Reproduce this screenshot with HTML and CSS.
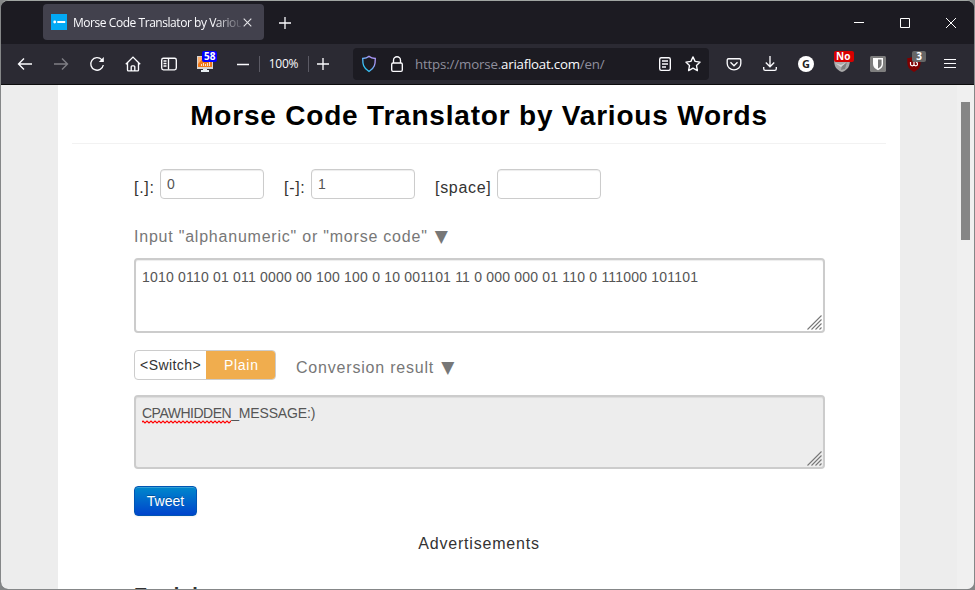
FILE: index.html
```
<!DOCTYPE html>
<html lang="en">
<head>
<meta charset="utf-8">
<title>Morse Code Translator by Various Words</title>
<link rel="stylesheet" href="styles.css">
</head>
<body>
<div class="window">
  <header class="tabbar">
    <div class="tab">
      <svg class="favicon" width="16" height="16" viewBox="0 0 16 16"><path fill="#03a9f4" d="M0 0h16v16H0z"/><circle cx="3.7" cy="8" r="1.4" fill="#fff"/><path fill="#fff" d="M6.3 7h7.9v2H6.3z"/></svg>
      <span class="tab-title">Morse Code Translator by Various</span>
      <svg class="tab-close" width="9" height="9" viewBox="0 0 9 9"><path d="M.7.7l7.6 7.6M8.3.7L.7 8.3" stroke="#e4e4e8" stroke-width="1.1"/></svg>
    </div>
    <svg class="newtab" width="12" height="12" viewBox="0 0 12 12"><path d="M6 0v12M0 6h12" stroke="#fbfbfe" stroke-width="1.3"/></svg>
    <div class="controls">
      <svg width="46" height="42" viewBox="0 0 46 42"><path d="M18 20.5h10" stroke="#fff"/></svg>
      <svg width="46" height="42" viewBox="0 0 46 42"><path d="M18.5 16.5h9v9h-9z" fill="none" stroke="#fff"/></svg>
      <svg width="46" height="42" viewBox="0 0 46 42"><path d="M18 16l10 10M28 16L18 26" stroke="#fff"/></svg>
    </div>
  </header>
  <nav class="toolbar">
    <span class="tool"><svg width="16" height="16" viewBox="0 0 16 16"><path d="M15 8H1.5M7 2.5L1.5 8 7 13.5"/></svg></span>
    <span class="tool dim"><svg width="16" height="16" viewBox="0 0 16 16"><path d="M1 8h13.5M9 2.5L14.5 8 9 13.5"/></svg></span>
    <span class="tool"><svg width="16" height="16" viewBox="0 0 16 16"><path d="M14.3 9A6.3 6.3 0 1 1 12.7 3.6L14 5"/><path d="M14.8 1v5h-5z" fill="#fbfbfe" stroke="none"/></svg></span>
    <span class="tool"><svg width="16" height="16" viewBox="0 0 16 16"><path d="M.8 8.200L8 1.100l7.200 7.100M2.500 7v7c0 .6.300.9.900.9h9.200c.6 0 .9-.3.900-.9V7M6.200 14.700v-3.900c0-.6.300-.9.900-.9h1.800c.6 0 .9.300.9.900v3.900"/></svg></span>
    <span class="tool"><svg width="16" height="16" viewBox="0 0 16 16"><rect x=".7" y="2.2" width="14.6" height="11.6" rx="1.7"/><path d="M7.5 2.5v11M2.5 5h3M2.5 7.5h3M2.5 10h3"/></svg></span>
    <span class="tool"><svg width="16" height="16" viewBox="0 0 16 16" stroke="none"><path fill="#d8d4d0" d="M0 0h16v13H0z"/><path fill="#f07818" d="M1 1h14v10H1z"/><path fill="#ffb070" d="M1 1h6L1 8z"/><path fill="#ffe0c4" d="M4 8h1v2H4zM6 7h1v3H6zM8 8h1v2H8zM10 7h1v3h-1zM12 6h1v4h-1z"/><path fill="#e7eef1" d="M6 13h4v1h2v2H4v-2h2z"/></svg><b class="badge blue">58</b></span>
    <span class="zoom-minus"><svg width="12" height="12" viewBox="0 0 12 12"><path d="M0 6.5h12"/></svg></span>
    <i class="sep"></i>
    <span class="zoom-label">100%</span>
    <i class="sep"></i>
    <span class="zoom-plus"><svg width="12" height="12" viewBox="0 0 12 12"><path d="M0 6h12M6 0v12"/></svg></span>
    <div class="urlbar">
      <svg width="16" height="18" viewBox="0 0 16 18"><defs><linearGradient id="shield" x1="1" y1="0" x2="0" y2="1"><stop offset=".25" stop-color="#a896f5"/><stop offset=".8" stop-color="#2cc4f4"/></linearGradient></defs><path stroke="url(#shield)" d="M8 1.400Q10.500 3.300 14.300 3.500c0 5.500-.5 9.500-6.300 13C2.200 13 1.700 9 1.700 3.500Q5.500 3.300 8 1.400z"/></svg>
      <svg class="lock" width="12" height="16" viewBox="0 0 12 16"><rect x=".7" y="7" width="10.600" height="8.300" rx="1.300"/><path d="M2.500 7V4.200a3.500 3.500 0 0 1 7 0V7"/></svg>
      <span class="url">https://morse.<em>ariafloat.com</em>/en/</span>
      <svg class="reader" width="12" height="14" viewBox="0 0 12 14"><rect x=".7" y=".7" width="10.600" height="12.600" rx="1.500"/><path d="M3 4h6M3 7h6M3 10h4"/></svg>
      <svg class="star" width="16" height="16" viewBox="0 0 16 16"><path stroke-linejoin="round" d="M8 .9l2.100 4.500 5 .7-3.600 3.500.9 5L8 12.200l-4.400 2.400.9-5L.9 6.100l5-.7z"/></svg>
    </div>
    <span class="tool"><svg width="16" height="16" viewBox="0 0 16 16"><path d="M2.500 2.700h11c.8 0 1.300.5 1.300 1.300v3.500a6.800 6.300 0 0 1-13.600 0V4c0-.8.5-1.300 1.300-1.300zM4.500 6.300L8 9.700l3.500-3.400"/></svg></span>
    <span class="tool"><svg width="16" height="16" viewBox="0 0 16 16"><path d="M8 0v10.500M3.800 6.500L8 10.700l4.200-4.200M1.700 11v1.800c0 1 .6 1.600 1.600 1.600h9.400c1 0 1.600-.6 1.600-1.600V11"/></svg></span>
    <span class="tool"><b class="g">G</b></span>
    <span class="tool"><svg width="16" height="16" viewBox="0 0 16 16" stroke="none"><path fill="#a9a9a9" d="M0 3h16c0 7-2 11-8 13C2 14 0 10 0 3z"/><path fill="#808080" d="M8 9l5-3-2 7-4 1z"/><path fill="#d4d4d4" d="M1 7l6 2 6-3-6 5z"/></svg><b class="badge red">No</b></span>
    <span class="tool"><svg width="16" height="16" viewBox="0 0 16 16" stroke="none"><rect width="16" height="16" rx="1.500" fill="#7e7e7e"/><path fill="#fff" d="M3 2h10v6c0 3-2 4.700-5 6.200C5 12.700 3 11 3 8z"/><path fill="#777" d="M8 3.500h3.600V8c0 2-1.200 3.200-3.600 4.500z"/></svg></span>
    <span class="tool"><svg width="16" height="16" viewBox="0 0 16 16" stroke="none"><path fill="#800000" d="M8 0c2 1.500 4 2 6.700 2 0 8 0 10-6.700 14C1.300 12 1.300 10 1.300 2 4 2 6 1.500 8 0z"/><path class="glyph" d="M4.500 6v2.300c0 2 3.500 2 3.500 0V6M8 8.300c0 2 3.500 2 3.500 0C11.500 6.800 11 6 9.800 6"/></svg><b class="badge gray">3</b></span>
    <span class="tool"><svg width="16" height="16" viewBox="0 0 16 16" class="menu"><path d="M2 3.500h12M2 7.500h12M2 11.500h12"/></svg></span>
  </nav>
  <div class="viewport">
    <main class="page">
      <h1>Morse Code Translator by Various Words</h1>
      <div class="form">
        <div class="keys">
          <label>[.]:</label><input class="key" type="text" value="0">
          <label class="next">[-]:</label><input class="key" type="text" value="1">
          <label class="next">[space]</label><input class="key" type="text" value=" ">
        </div>
        <p class="caption">Input "alphanumeric" or "morse code" <span class="arrow">▼</span></p>
        <div class="area">1010 0110 01 011 0000 00 100 100 0 10 001101 11 0 000 000 01 110 0 111000 101101
          <svg class="grip" width="15" height="15" viewBox="0 0 15 15"><path d="M.5 14.500l14-14M4.500 14.500l10-10M8.500 14.500l6-6M12.500 14.500l2-2"/></svg>
        </div>
        <div class="result-row">
          <div class="switch"><span>&lt;Switch&gt;</span><span class="on">Plain</span></div>
          <p class="caption">Conversion result <span class="arrow">▼</span></p>
        </div>
        <div class="area result"><span class="misspelt">CPAWHIDDEN<svg class="wave" width="89" height="4" viewBox="0 0 89 4"><defs><pattern id="squiggle" width="4" height="4" patternUnits="userSpaceOnUse"><path d="M-1 3L1 1l2 2 2-2" fill="none" stroke="#f00" stroke-width="1.200"/></pattern></defs><path d="M0 0h89v4H0z" fill="url(#squiggle)"/></svg></span>_MESSAGE:)
          <svg class="grip" width="15" height="15" viewBox="0 0 15 15"><path d="M.5 14.500l14-14M4.500 14.500l10-10M8.500 14.500l6-6M12.500 14.500l2-2"/></svg>
        </div>
        <button class="tweet">Tweet</button>
        <p class="ads">Advertisements</p>
        <h2>Explain</h2>
      </div>
    </main>
    <div class="scrollbar"><div class="thumb"></div></div>
  </div>
</div>
</body>
</html>
```
FILE: styles.css
```
* { box-sizing: border-box; }
body { margin: 0; background: #858788; overflow: hidden; }
svg { display: block; flex: none; }
.window {
  width: 975px; height: 590px; overflow: hidden;
  border: 1px solid #858788; border-top-color: #a0a5a2;
  border-radius: 8px; background: #1c1b22;
}
.tabbar {
  height: 43px; padding-left: 42px; display: flex; align-items: center;
  background: #1c1b22; font: 12px "Open Sans", sans-serif;
}
.tab {
  width: 221px; height: 36px; padding: 0 12px 0 8px; display: flex; align-items: center;
  background: #42414d; border-radius: 4px; color: #fbfbfe; margin-bottom: 1px;
}
.tab-title {
  flex: 1; margin-left: 6px; overflow: hidden; white-space: nowrap; letter-spacing: -0.45px;
  -webkit-mask-image: linear-gradient(90deg, #000 84%, transparent 102%);
  mask-image: linear-gradient(90deg, #000 84%, transparent 102%);
}
.tab-close { margin-left: 2px; }
.newtab { margin-left: 15px; margin-top: 1px; }
.controls { margin-left: auto; display: flex; }
.toolbar {
  height: 41px; padding-left: 6px; display: flex; align-items: center;
  background: #2b2a33; border-bottom: 1px solid #0c0c0d;
}
.toolbar svg { fill: none; stroke: #fbfbfe; stroke-width: 1.35; }
.tool { position: relative; width: 36px; height: 32px; flex: none; display: flex; align-items: center; justify-content: center; }
.tool svg[stroke="none"] { stroke: none; }
.glyph { fill: none; stroke: #fff; stroke-width: 1.2; }
.dim { opacity: .4; }
.toolbar .menu { stroke-width: 1; }
.badge {
  position: absolute; top: 3px; left: 15px; height: 11px; padding: 0 2px;
  font: 700 10px/11px "Open Sans", sans-serif; color: #fff; border-radius: 2px;
}
.blue { background: #00f; }
.red { background: #d70000; left: 10px; width: 20px; }
.gray { background: #666; left: 16px; width: 14px; text-align: center; }
.zoom-minus { width: 36px; padding-left: 14px; }
.sep { width: 1px; height: 16px; background: #5b5a64; }
.zoom-label { width: 48px; padding: 0 1px 1px 0; text-align: center; color: #fbfbfe; font: 12px "Open Sans", sans-serif; letter-spacing: -0.200px; }
.zoom-plus { width: 44px; padding-left: 8px; }
.urlbar {
  width: 356px; height: 32px; margin-right: 7px; padding: 0 8px; flex: none;
  display: flex; align-items: center; background: #1c1b22; border-radius: 4px;
}
.lock { margin-left: 14px; }
.url { margin-left: 12px; color: #8f8f9d; font: 13.3px "Open Sans", sans-serif; letter-spacing: -0.17px; }
.url em { font-style: normal; color: #fbfbfe; letter-spacing: -0.22px; }
.reader { margin-left: auto; }
.star { margin-left: 14px; }
.g { width: 16px; height: 16px; border-radius: 50%; background: #fff; color: #222; text-align: center; font: 700 11px/16px "Open Sans", sans-serif; }
.viewport { height: 504px; display: flex; overflow: hidden; background: #ededed; }
.page {
  width: 842px; margin-left: 57px; padding: 0 14px; flex: none; background: #fff;
  font-family: "Liberation Sans", Arial, sans-serif; color: #333; letter-spacing: 0.8px;
}
h1 {
  height: 59px; margin: 0; border-bottom: 1px solid #f2f2f2; text-align: center;
  font-size: 28px; line-height: 61px; color: #000;
}
.form { padding: 25px 61px 0 62px; font-size: 16px; }
.keys { display: flex; height: 30px; }
.keys label { flex: none; width: 26px; line-height: 37px; white-space: nowrap; letter-spacing: 0.7px; }
.keys .next { width: 27px; margin-left: 20px; }
.keys .next:last-of-type { width: 62px; }
.key {
  width: 104px; height: 30px; padding: 4px 6px; border: 1px solid #ccc; border-radius: 4px;
  box-shadow: inset 0 1px 1px rgba(0,0,0,.075); font: 14px "Liberation Sans", Arial, sans-serif; color: #555;
}
.caption { margin: 0; line-height: 20px; color: #777; white-space: nowrap; }
.arrow { display: inline-block; height: 20px; vertical-align: top; font: 17px/18px "DejaVu Sans", sans-serif; margin-left: 2px; }
.keys + .caption { height: 20px; margin-top: 28px; letter-spacing: 0.78px; }
.area {
  position: relative; width: 691px; height: 75px; margin-top: 11px; padding: 7px 6px;
  border: 2px solid #ccc; border-radius: 4px; box-shadow: inset 0 1px 1px rgba(0,0,0,.075);
  font-size: 14px; line-height: 20px; letter-spacing: 0.195px; color: #555; white-space: nowrap;
}
.grip { position: absolute; right: 1px; bottom: 1px; fill: none; stroke: #777; stroke-width: 1.100; }
.result-row { display: flex; margin-top: 17px; }
.switch { display: flex; width: 142px; height: 30px; border: 1px solid #ccc; border-radius: 4px; overflow: hidden; font-size: 14px; line-height: 28px; }
.switch span { width: 71px; padding-left: 5px; letter-spacing: 0.45px; }
.switch .on { width: 69px; padding-left: 18px; background: #f0ad4e; color: #fff; letter-spacing: 0.7px; }
.result-row .caption { margin: 8px 0 0 20px; height: 20px; }
.result { height: 74px; margin-top: 15px; padding-top: 6px; background: #ededed; letter-spacing: -0.15px; }
.misspelt { position: relative; letter-spacing: -0.5px; }
.wave { position: absolute; left: 0; bottom: -3px; }
.tweet {
  display: block; width: 63px; height: 30px; margin-top: 17px; padding: 0;
  border: 1px solid #0055b3; border-radius: 4px; background: linear-gradient(#08c, #04c);
  box-shadow: inset 0 1px 0 rgba(255,255,255,.2), 0 1px 2px rgba(0,0,0,.05);
  color: #fff; font: 14px "Liberation Sans", Arial, sans-serif; text-shadow: 0 -1px 0 rgba(0,0,0,.25);
}
.ads { margin: 18px 0 0; padding-right: 1px; line-height: 20px; text-align: center; }
h2 { margin: 29px 0 0; font-size: 20px; line-height: 24px; letter-spacing: 1px; }
.scrollbar { width: 17px; margin-left: auto; background: #f0f0f0; padding: 17px 4px 0; }
.thumb { width: 9px; height: 138px; background: #868686; }
```
